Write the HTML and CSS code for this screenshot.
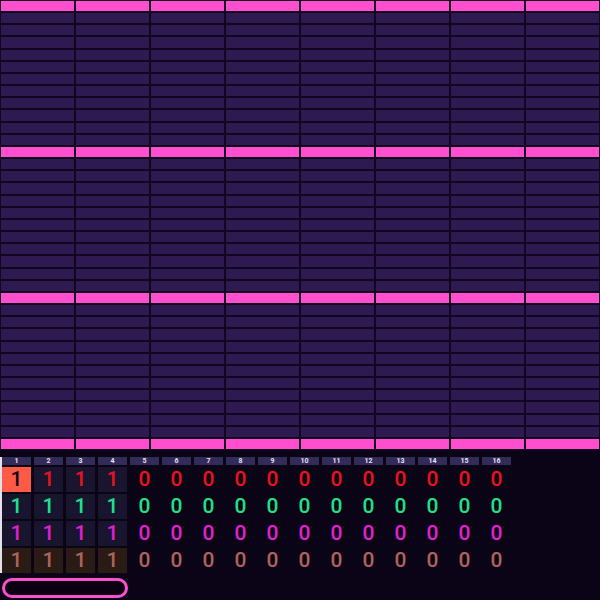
FILE: index.html
```html
<!DOCTYPE html>
<html lang="en">
<head>
    <meta charset="UTF-8">
    <meta name="viewport" content="width=device-width, initial-scale=1.0">
    <title>Sequencer</title>
    <link rel="stylesheet" href="styles.css">
</head>
<body>
    <div class="pattern-grid" id="pattern-grid"></div>

    <div class="steps" id="steps"></div>

    <div class="pill"></div>

    <script>
        var grid = document.getElementById("pattern-grid");
        for (var r = 0; r < 37; r++) {
            for (var c = 0; c < 8; c++) {
                var cell = document.createElement("div");
                cell.className = r % 12 === 0 ? "cell beat" : "cell";
                grid.appendChild(cell);
            }
        }

        var steps = document.getElementById("steps");
        for (var i = 1; i <= 16; i++) {
            var label = document.createElement("div");
            label.className = "step-label";
            label.textContent = i;
            steps.appendChild(label);
        }

        var tracks = ["red", "green", "pink", "brown"];
        tracks.forEach(function (name, t) {
            for (var i = 0; i < 16; i++) {
                var step = document.createElement("div");
                step.className = "step " + name;
                if (i < 4) step.className += " on";
                if (t === 0 && i === 0) step.className += " current";
                step.textContent = i < 4 ? "1" : "0";
                steps.appendChild(step);
            }
        });
    </script>
</body>
</html>
```

FILE: styles.css
```css
body {
    margin: 0;
    background: #0b0316;
    font-family: Roboto, "Liberation Sans", sans-serif;
    height: 600px;
    overflow: hidden;
}

.pattern-grid {
    display: grid;
    grid-template-columns: repeat(8, 1fr);
    grid-template-rows: repeat(37, 1fr);
    height: 450px;
    background: #10061f;
}
.cell {
    background: #2e1a50;
    border: 1px solid #10061f;
}
.cell.beat {
    background: #ff4fcf;
}

.steps {
    display: grid;
    grid-template-columns: repeat(16, 29px);
    grid-template-rows: 8px repeat(4, 25px);
    column-gap: 3px;
    row-gap: 2px;
    margin-top: 7px;
    border-left: 2px solid #e4e0ec;
    width: max-content;
}
.step-label {
    background: #342c58;
    color: #e6e2f2;
    font-size: 7px;
    font-weight: bold;
    line-height: 8px;
    text-align: center;
}
.step {
    font-size: 21px;
    font-weight: 500;
    line-height: 25px;
    text-align: center;
}
.step.red { color: #e8141c; }
.step.green { color: #20e08c; }
.step.pink { color: #e020d4; }
.step.brown { color: #b0645a; }
.step.on { background: #19152e; }
.step.brown.on { background: #2a1c14; }
.step.current {
    background: #ff5a46;
    color: #0b0316;
}

.pill {
    width: 120px;
    height: 14px;
    margin: 5px 0 0 2px;
    border: 3px solid #ff4fcf;
    border-radius: 12px;
    background: #0a0012;
}
```
